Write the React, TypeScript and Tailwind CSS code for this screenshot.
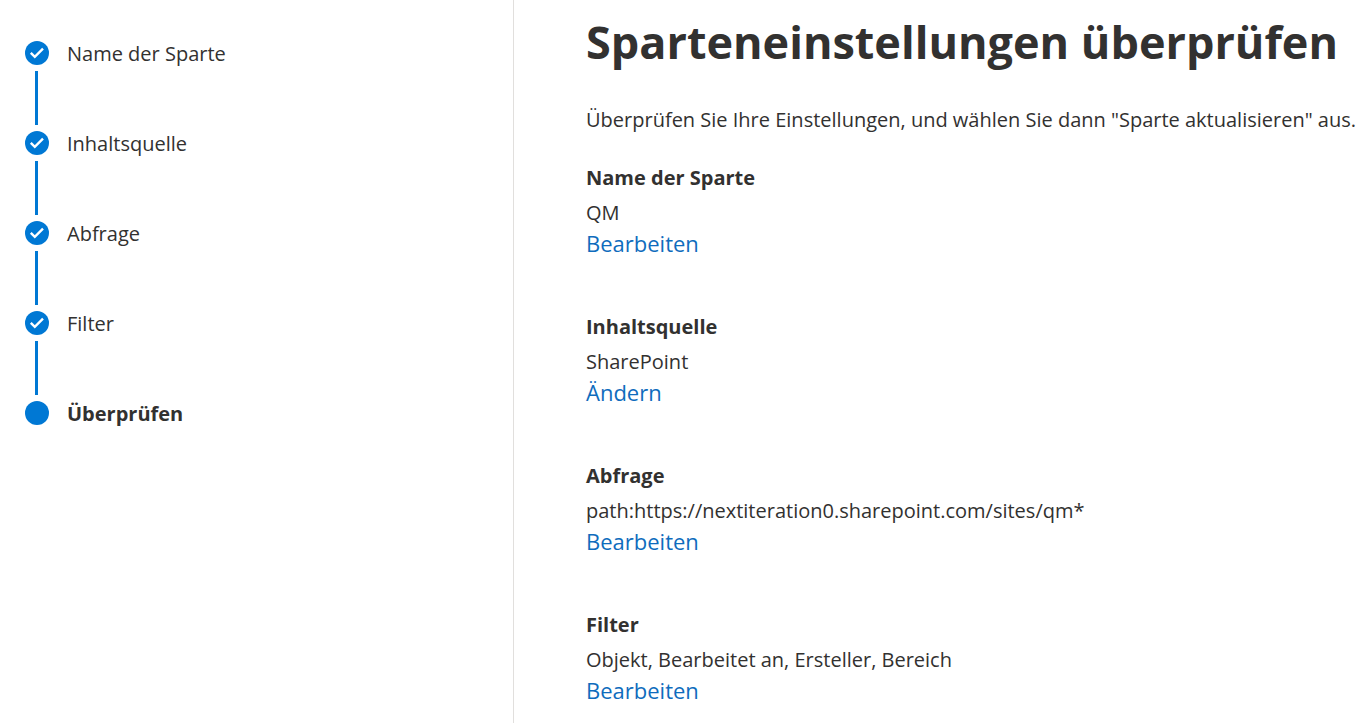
const STEPS = [
  { label: "Name der Sparte", done: true },
  { label: "Inhaltsquelle", done: true },
  { label: "Abfrage", done: true },
  { label: "Filter", done: true },
  { label: "Überprüfen", done: false },
];

const SETTINGS = [
  { title: "Name der Sparte", value: "QM", action: "Bearbeiten" },
  { title: "Inhaltsquelle", value: "SharePoint", action: "Ändern" },
  { title: "Abfrage", value: "path:https://nextiteration0.sharepoint.com/sites/qm*", action: "Bearbeiten" },
  { title: "Filter", value: "Objekt, Bearbeitet an, Ersteller, Bereich", action: "Bearbeiten" },
];

const StepIcon = ({ done }: { done: boolean }) => (
  <svg viewBox="0 0 24 24" className="size-6 shrink-0" aria-hidden="true">
    <circle cx="12" cy="12" r="12" fill="#0078d4" />
    {done && <path d="M5.8 11.8l4 4L18 7.6" fill="none" stroke="#fff" strokeWidth="2.4" />}
  </svg>
);

const Stepper = () => (
  <nav className="w-[514px] max-w-2/5 shrink-0 border-r border-[#e1dfdd] pl-[25px] pt-[38px]">
    <ol>
      {STEPS.map((step, i) => (
        <li key={step.label}>
          <div className="flex h-[30px] items-center gap-[18px]">
            <StepIcon done={step.done} />
            <span className={step.done ? "pt-0.5" : "pt-0.5 font-bold"}>{step.label}</span>
          </div>
          {i < STEPS.length - 1 && (
            <div className="h-[60px] py-[3px] pl-[10px]">
              <div className="h-full w-[3px] bg-[#0078d4]" />
            </div>
          )}
        </li>
      ))}
    </ol>
  </nav>
);

export default function App() {
  return (
    <div className="flex min-h-screen bg-white font-['Open_Sans','Noto_Sans',sans-serif] text-[20px] leading-[30px] text-[#323130]">
      <Stepper />
      <main className="min-w-0 flex-1 pl-[72px]">
        <h1 className="pt-3 text-[45px] leading-[60px] font-bold whitespace-nowrap">Sparteneinstellungen überprüfen</h1>
        <p className="mt-[33px] whitespace-nowrap">
          Überprüfen Sie Ihre Einstellungen, und wählen Sie dann "Sparte aktualisieren" aus.
        </p>
        <div className="mt-7 flex flex-col gap-[54px]">
          {SETTINGS.map((item) => (
            <section key={item.title}>
              <h2 className="font-bold">{item.title}</h2>
              <p className="mt-[5px]">{item.value}</p>
              <a href="#" className="block w-fit text-[22px] leading-[30px] text-[#0f6cbd]">
                {item.action}
              </a>
            </section>
          ))}
        </div>
      </main>
    </div>
  );
}
